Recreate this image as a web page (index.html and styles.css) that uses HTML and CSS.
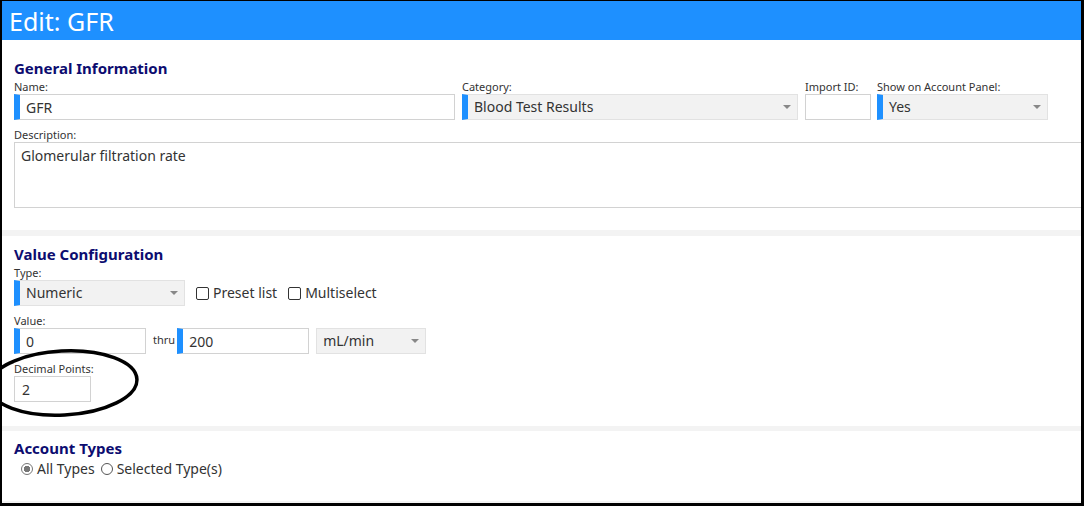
FILE: index.html
```html
<!DOCTYPE html>
<html lang="en">
<head>
  <meta charset="UTF-8">
  <title>Edit: GFR</title>
  <link rel="stylesheet" href="styles.css">
</head>
<body>
  <div class="frame">
    <header class="title-bar">Edit: GFR</header>

    <section class="card card-general">
      <h2>General Information</h2>
      <div class="row">
        <div class="field w-name">
          <label>Name:</label>
          <input class="ctl req" type="text" value="GFR">
        </div>
        <div class="field w-category">
          <label>Category:</label>
          <div class="ctl sel req">Blood Test Results<span class="arrow"></span></div>
        </div>
        <div class="field w-import">
          <label>Import ID:</label>
          <input class="ctl" type="text" value="">
        </div>
        <div class="field w-show">
          <label>Show on Account Panel:</label>
          <div class="ctl sel req">Yes<span class="arrow"></span></div>
        </div>
      </div>
      <div class="field field-desc">
        <label>Description:</label>
        <textarea class="desc">Glomerular filtration rate</textarea>
      </div>
    </section>

    <section class="card card-value">
      <h2>Value Configuration</h2>
      <div class="field">
        <label>Type:</label>
        <div class="row row-type">
          <div class="ctl sel req w-type">Numeric<span class="arrow"></span></div>
          <label class="check"><input type="checkbox"> Preset list</label>
          <label class="check"><input type="checkbox"> Multiselect</label>
        </div>
      </div>
      <div class="field">
        <label>Value:</label>
        <div class="row row-value">
          <input class="ctl req w-num" type="text" value="0">
          <span class="thru">thru</span>
          <input class="ctl req w-num" type="text" value="200">
          <div class="ctl sel w-unit">mL/min<span class="arrow"></span></div>
        </div>
      </div>
      <div class="field">
        <label>Decimal Points:</label>
        <input class="ctl w-dec" type="text" value="2">
      </div>
    </section>

    <section class="card card-last">
      <h2>Account Types</h2>
      <div class="radios">
        <label class="radio"><input type="radio" name="acct" checked> All Types</label>
        <label class="radio"><input type="radio" name="acct"> Selected Type(s)</label>
      </div>
    </section>

    <!-- pen circle drawn over the decimal points field -->
    <svg class="markup" width="1084" height="506" viewBox="0 0 1084 506">
      <ellipse cx="63" cy="383" rx="74" ry="32" transform="rotate(-3 63 383)"
               fill="none" stroke="#000" stroke-width="3.5"/>
    </svg>
  </div>
</body>
</html>
```

FILE: styles.css
```css
* { box-sizing: border-box; }
body {
  margin: 0;
  font-family: "Noto Sans", "Liberation Sans", sans-serif;
  color: #333;
  background: #fff;
}
.frame {
  position: relative;
  width: 1084px;
  height: 506px;
  border-style: solid;
  border-color: #000;
  border-width: 1px 3px 3px 2px;
  background: #f3f3f3;
  overflow: hidden;
  display: flex;
  flex-direction: column;
}
.title-bar {
  height: 39px;
  flex: none;
  background: #1e90ff;
  color: #fff;
  font-size: 25px;
  line-height: 37px;
  padding: 2px 0 0 7px;
}
.card {
  background: #fff;
  padding: 7px 0 24px 12px;
  margin-bottom: 6px;
  overflow: hidden;
  flex: none;
}
.card-general {
  padding-top: 18px;
  padding-bottom: 22px;
}
.card-value {
  padding-top: 8px;
  margin-bottom: 5px;
}
.card-last {
  flex: 1;
  margin-bottom: 2px;
  padding-top: 7px;
}
h2 {
  margin: 0 0 1px;
  font-size: 15px;
  line-height: 20px;
  font-weight: bold;
  color: #0c0c70;
}
.row {
  display: flex;
  gap: 7px;
  align-items: flex-start;
}
.field > label {
  display: block;
  font-size: 11px;
  line-height: 15px;
  color: #333;
}
.card > .field + .field { margin-top: 7px; }
.card > .row + .field-desc { margin-top: 7px; }

/* inputs and fake selects */
.ctl {
  display: block;
  height: 26px;
  border: 1px solid #d2d2d2;
  border-radius: 0;
  background: #fff;
  font-family: inherit;
  font-size: 14px;
  line-height: 24px;
  color: #333;
  padding: 0 6px;
  outline: none;
  margin: 0;
}
.ctl.req { border-left: 6px solid #1e90ff; }
.sel {
  position: relative;
  background: #f2f2f2;
  border-color: #e2e2e2;
}
.sel.req { border-left-color: #1e90ff; }
.arrow {
  position: absolute;
  right: 6px;
  top: 10px;
  width: 0;
  height: 0;
  border-left: 4px solid transparent;
  border-right: 4px solid transparent;
  border-top: 4px solid #888;
}
.w-name { width: 441px; }
.w-name .ctl { width: 100%; }
.w-category { width: 336px; }
.w-import { width: 66px; }
.w-import .ctl { width: 100%; }
.w-show { width: 171px; margin-left: -1px; }
.w-type { width: 171px; }
.w-num { width: 132px; }
.w-unit { width: 110px; }
.w-dec { width: 77px; padding-left: 7px; }

.desc {
  display: block;
  width: 1100px;
  height: 66px;
  border: 1px solid #d2d2d2;
  font-family: inherit;
  font-size: 14px;
  line-height: 18px;
  color: #333;
  padding: 4px 6px;
  resize: none;
  outline: none;
}

/* checkboxes next to the type select */
.row-type { gap: 0; align-items: center; }
.check {
  display: flex;
  align-items: center;
  font-size: 14px;
  line-height: 26px;
  color: #333;
  margin-left: 11px;
}
.check input {
  appearance: none;
  width: 13px;
  height: 13px;
  margin: 0 4px 0 0;
  border: 1px solid #333;
  border-radius: 2px;
  background: #fff;
}
.thru {
  font-size: 11px;
  line-height: 15px;
  margin: 4px -5px 0 0;
}

.radios {
  display: flex;
  align-items: center;
  padding-left: 7px;
  font-size: 14px;
  line-height: 19px;
}
.radio {
  display: flex;
  align-items: center;
  margin-right: 6px;
}
.radio input {
  appearance: none;
  width: 12px;
  height: 12px;
  margin: 0 4px 0 0;
  border: 1px solid #555;
  border-radius: 50%;
  background: #fff;
}
.radio input:checked {
  border-color: #777;
  background: radial-gradient(circle, #777 0 3px, #fff 3.5px);
}

.markup {
  position: absolute;
  left: -2px;
  top: -1px;
  pointer-events: none;
}
```
